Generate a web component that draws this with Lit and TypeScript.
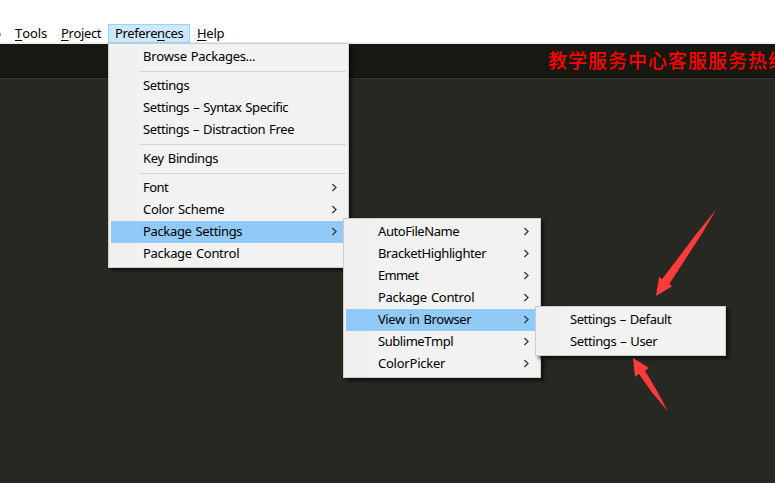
import { LitElement, html, css, svg, nothing } from "lit";
import { customElement, property } from "lit/decorators.js";
import { classMap } from "lit/directives/class-map.js";

interface Item {
  label?: string;
  width?: number;
  sub?: boolean;
  active?: boolean;
}

const preferences: Item[] = [
  { label: "Browse Packages...", width: 112 },
  {},
  { label: "Settings", width: 46 },
  { label: "Settings – Syntax Specific", width: 145 },
  { label: "Settings – Distraction Free", width: 151 },
  {},
  { label: "Key Bindings", width: 75 },
  {},
  { label: "Font", width: 25, sub: true },
  { label: "Color Scheme", width: 81, sub: true },
  { label: "Package Settings", width: 99, sub: true, active: true },
  { label: "Package Control", width: 96 },
];

const packages: Item[] = [
  { label: "AutoFileName", width: 81, sub: true },
  { label: "BracketHighlighter", width: 108, sub: true },
  { label: "Emmet", width: 40, sub: true },
  { label: "Package Control", width: 96, sub: true },
  { label: "View in Browser", width: 93, sub: true, active: true },
  { label: "SublimeTmpl", width: 75, sub: true },
  { label: "ColorPicker", width: 67, sub: true },
];

const viewInBrowser: Item[] = [
  { label: "Settings – Default", width: 101 },
  { label: "Settings – User", width: 87 },
];

/* A menu label whose tracking is adjusted to fill a given width. */
@customElement("menu-label")
class MenuLabel extends LitElement {
  @property() text = "";
  @property({ type: Number }) width = 0;
  @property({ type: Number }) mnemonic = -1;

  static styles = css`
    :host { display: inline-block; white-space: pre; }
    .text { display: inline-block; font-kerning: none; word-spacing: 1px; }
    .key { text-decoration: underline; text-underline-offset: 2px; text-decoration-thickness: 1px; text-decoration-skip-ink: none; }
  `;

  render() {
    const m = this.mnemonic;
    return m < 0
      ? html`<span class="text">${this.text}</span>`
      : html`<span class="text">${this.text.slice(0, m)}<span class="key">${this.text[m]}</span>${this.text.slice(m + 1)}</span>`;
  }

  firstUpdated() {
    const el = this.renderRoot.querySelector(".text") as HTMLElement;
    const natural = el.getBoundingClientRect().width;
    el.style.letterSpacing = `${(this.width + 0.2 - natural) / this.text.length}px`;
  }
}

@customElement("popup-menu")
class PopupMenu extends LitElement {
  @property({ attribute: false }) items: Item[] = [];

  static styles = css`
    :host {
      display: block;
      box-sizing: border-box;
      border: 1px solid #cccccc;
      padding: 2px;
      background: linear-gradient(90deg, #f0f0f0 28px, #f2f2f2 28px);
      box-shadow: 3px 3px 3px rgba(0, 0, 0, 0.55);
    }
    .row { display: flex; align-items: center; justify-content: space-between; height: 22px; box-sizing: border-box; padding: 0 8px 2px 32px; line-height: 20px; }
    .active { background: #91c9f7; }
    .rule { height: 1px; margin: 3px 0 3px 28px; background: #d4d4d4; }
    .chevron { display: block; width: 7px; height: 9px; fill: none; stroke: #3c3c3c; stroke-width: 1.35; }
  `;

  render() {
    return this.items.map((i) =>
      i.label
        ? html`<div class=${classMap({ row: true, active: !!i.active })}>
            <menu-label .text=${i.label} .width=${i.width ?? 0}></menu-label>
            ${i.sub ? html`<svg class="chevron" viewBox="0 0 7 9"><path d="M1.4 .9 5 4.5 1.4 8.1" /></svg>` : nothing}
          </div>`
        : html`<div class="rule"></div>`
    );
  }
}

@customElement("app-root")
class AppRoot extends LitElement {
  static styles = css`
    :host {
      display: block;
      position: relative;
      width: 775px;
      height: 483px;
      overflow: hidden;
      background: #272822;
      font: 13px "Noto Sans", "Open Sans", sans-serif;
      color: #000;
    }
    .menubar { display: flex; height: 44px; box-sizing: border-box; padding-top: 24px; background: #fff; border-bottom: 2px solid #f0f0f0; }
    .edge { width: 1px; height: 3px; margin-top: 9px; background: #63b7e8; }
    .entry { box-sizing: border-box; height: 19px; line-height: 18px; padding: 0 7px; border: 0 solid #99d1ff; }
    .tools { width: 47px; margin-left: 7px; }
    .project { width: 53px; padding-left: 6px; }
    .open { width: 82px; border-width: 1px; padding: 0 6px; line-height: 16px; background: #cce8ff; }
    .tabs { height: 34px; box-sizing: border-box; padding-left: 548px; background: #171812; border-bottom: 1px solid #0c0d0a; box-shadow: 0 1px #373832; }
    .notice { white-space: nowrap; font: 500 19px/32px "Noto Sans CJK SC", sans-serif; letter-spacing: 1px; color: #f00; }
    .menu { position: absolute; }
    .m1 { left: 108px; top: 43px; width: 241px; }
    .m2 { left: 343px; top: 218px; width: 198px; }
    .m3 { left: 535px; top: 306px; width: 191px; }
    .arrows { position: absolute; left: 0; top: 0; fill: #ff3b3b; }
  `;

  render() {
    return html`
      <div class="menubar">
        <div class="edge"></div>
        <div class="entry tools"><menu-label .text=${"Tools"} .width=${32} .mnemonic=${0}></menu-label></div>
        <div class="entry project"><menu-label .text=${"Project"} .width=${40} .mnemonic=${0}></menu-label></div>
        <div class="entry open"><menu-label .text=${"Preferences"} .width=${68} .mnemonic=${7}></menu-label></div>
        <div class="entry"><menu-label .text=${"Help"} .width=${27} .mnemonic=${0}></menu-label></div>
      </div>
      <div class="tabs"><div class="notice">教学服务中心客服服务热线</div></div>
      <popup-menu class="menu m1" .items=${preferences}></popup-menu>
      <popup-menu class="menu m2" .items=${packages}></popup-menu>
      <popup-menu class="menu m3" .items=${viewInBrowser}></popup-menu>
      <svg class="arrows" width="775" height="483" viewBox="0 0 775 483">
        ${svg`
          <path d="M716.5 209 702 233.5 669.3 284 672.2 286.2 656 296 659 277 662 279.3 697 233Z" />
          <path d="M633 358 649 368 645 370.7 657 391 668 411.5 652 392.5 638.8 373.8 635 377Z" />`}
      </svg>
    `;
  }
}
